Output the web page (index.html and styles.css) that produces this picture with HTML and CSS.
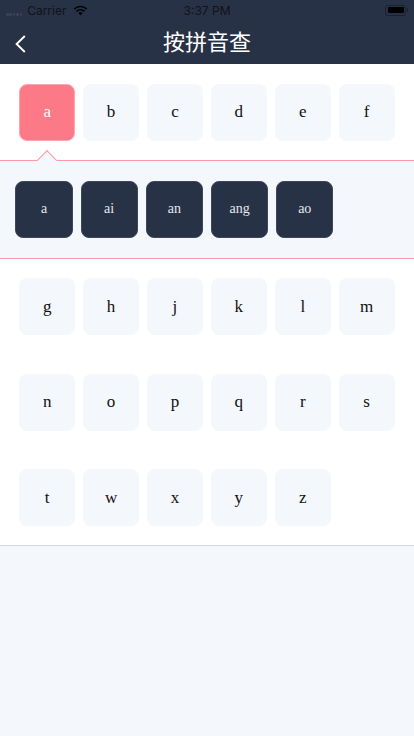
FILE: index.html
```html
<!DOCTYPE html>
<html lang="zh">
<head>
    <meta charset="UTF-8">
    <meta name="viewport" content="width=device-width, initial-scale=1.0">
    <title>按拼音查</title>
    <link rel="stylesheet" href="styles.css">
</head>
<body>
    <div class="header">
        <div class="status-bar">
            <div class="status-left">
                <span class="signal"><i></i><i></i><i></i><i></i><i></i></span>
                <span>Carrier</span>
                <svg class="wifi" width="15" height="11" viewBox="0 0 16 12">
                    <path d="M8 11.5 L5.6 8.8 A3.6 3.6 0 0 1 10.4 8.8 Z" fill="#000"/>
                    <path d="M3.6 6.9 A6.4 6.4 0 0 1 12.4 6.9" fill="none" stroke="#000" stroke-width="1.7"/>
                    <path d="M1.2 4.3 A9.8 9.8 0 0 1 14.8 4.3" fill="none" stroke="#000" stroke-width="1.7"/>
                </svg>
            </div>
            <span class="status-time">3:37 PM</span>
            <div class="battery"><span class="battery-level"></span></div>
        </div>
        <div class="nav-bar">
            <svg class="back" width="11" height="18" viewBox="0 0 11 18">
                <path d="M9.8 1 L1.6 9 L9.8 17" fill="none" stroke="#fff" stroke-width="1.9"/>
            </svg>
            <h1>按拼音查</h1>
        </div>
    </div>

    <div class="letters">
        <div class="letter-row first">
            <div class="key active">a</div>
            <div class="key">b</div>
            <div class="key">c</div>
            <div class="key">d</div>
            <div class="key">e</div>
            <div class="key">f</div>
        </div>

        <div class="panel">
            <span class="caret"></span>
            <div class="sub-key">a</div>
            <div class="sub-key">ai</div>
            <div class="sub-key">an</div>
            <div class="sub-key">ang</div>
            <div class="sub-key">ao</div>
        </div>

        <div class="letter-row">
            <div class="key">g</div>
            <div class="key">h</div>
            <div class="key">j</div>
            <div class="key">k</div>
            <div class="key">l</div>
            <div class="key">m</div>
        </div>
        <div class="letter-row">
            <div class="key">n</div>
            <div class="key">o</div>
            <div class="key">p</div>
            <div class="key">q</div>
            <div class="key">r</div>
            <div class="key">s</div>
        </div>
        <div class="letter-row">
            <div class="key">t</div>
            <div class="key">w</div>
            <div class="key">x</div>
            <div class="key">y</div>
            <div class="key">z</div>
        </div>
    </div>
</body>
</html>
```

FILE: styles.css
```css
* {
    box-sizing: border-box;
}

body {
    margin: 0;
    height: 736px;
    overflow: hidden;
    background-color: #f4f7fb;
    font-family: "Liberation Serif", serif;
}

.header {
    height: 64px;
    background-color: #283246;
}

.status-bar {
    height: 20px;
    display: flex;
    align-items: center;
    justify-content: space-between;
    padding: 0 8px 0 6px;
    position: relative;
    font-family: "Inter", "Liberation Sans", sans-serif;
    font-size: 12px;
    color: #10131a;
}

.status-left {
    display: flex;
    align-items: center;
    gap: 5px;
}

.signal {
    display: flex;
    gap: 0.8px;
    align-self: flex-end;
    padding-bottom: 2px;
}

.signal i {
    width: 2.6px;
    height: 2.6px;
    border-radius: 50%;
    background-color: #3a4356;
}

.wifi {
    margin-left: 1px;
}

.status-time {
    position: absolute;
    left: 0;
    right: 0;
    text-align: center;
}

.battery {
    position: relative;
    width: 21px;
    height: 11px;
    padding: 1.5px;
    border: 1px solid #1a2130;
    border-radius: 3px;
}

.battery::after {
    content: "";
    position: absolute;
    right: -3px;
    top: 2.5px;
    width: 1.5px;
    height: 4px;
    background-color: #1a2130;
}

.battery-level {
    display: block;
    height: 100%;
    background-color: #000;
    border-radius: 1px;
}

.nav-bar {
    height: 44px;
    display: flex;
    align-items: center;
    justify-content: center;
    padding-bottom: 4px;
    position: relative;
}

.back {
    position: absolute;
    left: 15px;
    top: 14.5px;
}

.nav-bar h1 {
    margin: 0;
    font-family: "Noto Sans CJK SC", sans-serif;
    font-size: 22px;
    font-weight: 400;
    color: #fff;
}

.letters {
    background-color: #fff;
    height: 482px;
    border-bottom: 1px solid #d6d6d6;
}

.letter-row {
    display: flex;
    gap: 8.1px;
    padding: 0 19.3px;
    margin-top: 38.6px;
}

.letter-row.first {
    margin-top: 0;
    padding-top: 19.5px;
}

.panel + .letter-row {
    margin-top: 19px;
}

.key {
    flex: 0 0 55.8px;
    height: 57px;
    display: flex;
    align-items: center;
    justify-content: center;
    background-color: #f4f7fb;
    border-radius: 8px;
    font-size: 17px;
    color: #111;
}

.key.active {
    background-color: #fc7a87;
    border: 1px solid #fda5ae;
    color: #fff;
}

.panel {
    position: relative;
    height: 99px;
    margin-top: 19.5px;
    display: flex;
    gap: 8px;
    padding: 19.7px 15.4px 0;
    background-color: #f4f7fb;
    border-top: 1px solid #fb9aa6;
    border-bottom: 1px solid #fb9aa6;
}

.caret {
    position: absolute;
    left: 39.7px;
    top: -8px;
    width: 14px;
    height: 14px;
    background-color: #f4f7fb;
    border-top: 1px solid #fb9aa6;
    border-left: 1px solid #fb9aa6;
    transform: rotate(45deg);
}

.sub-key {
    width: 57.2px;
    height: 57.5px;
    display: flex;
    align-items: center;
    justify-content: center;
    background-color: #283246;
    border: 1px solid #3d475a;
    border-radius: 8px;
    font-size: 14px;
    color: #e6e8ec;
}
```
